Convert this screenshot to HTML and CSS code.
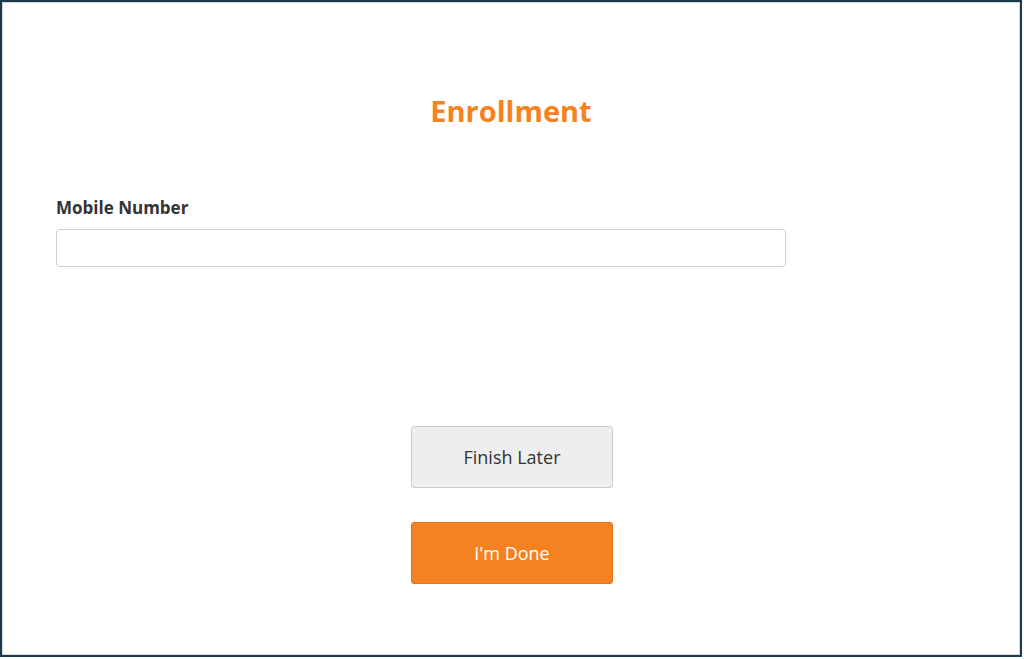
FILE: index.html
```html
<!DOCTYPE html>
<html lang="en">
<head>
<meta charset="utf-8">
<title>Enrollment</title>
<link rel="stylesheet" href="styles.css">
</head>
<body>
<div class="frame">
  <main class="content">
    <h1 class="title">Enrollment</h1>
    <form class="form">
      <label class="label" for="mobile">Mobile Number</label>
      <input class="input" id="mobile" type="text">
      <div class="actions">
        <button type="button" class="btn btn-secondary">Finish Later</button>
        <button type="button" class="btn btn-primary">I'm Done</button>
      </div>
    </form>
  </main>
</div>
</body>
</html>
```
FILE: styles.css
```css
html, body {
  margin: 0;
  padding: 0;
  background: #ffffff;
}
body {
  font-family: "Open Sans", "Liberation Sans", sans-serif;
  width: 1024px;
  height: 659px;
  overflow: hidden;
}
.frame {
  box-sizing: border-box;
  width: 1022px;
  height: 657px;
  border: 2px solid #1d3a4b;
  box-shadow: inset 1px 1px 0 #d6dadc, inset -1px -1px 0 #d6dadc;
  background: #fff;
}
.content {
  padding: 0;
}
.title {
  margin: 0;
  padding-top: 89px;
  text-align: center;
  font-size: 29px;
  line-height: 40px;
  font-weight: 700;
  color: #f5821f;
}
.form {
  display: flex;
  flex-direction: column;
  margin-top: 65px;
  padding-left: 54px;
}
.label {
  font-size: 17px;
  line-height: 23px;
  font-weight: 700;
  color: #333333;
}
.input {
  box-sizing: border-box;
  margin-top: 10px;
  width: 730px;
  height: 38px;
  border: 1px solid #cfcfcf;
  border-radius: 4px;
  background: #fff;
  outline: none;
}
.actions {
  display: flex;
  flex-direction: column;
  align-items: center;
  gap: 34px;
  margin-top: 159px;
  margin-left: 355px;
  width: 202px;
}
.btn {
  box-sizing: border-box;
  width: 202px;
  height: 62px;
  border-radius: 3px;
  font-family: "Open Sans", "Liberation Sans", sans-serif;
  font-size: 18px;
  cursor: pointer;
}
.btn-secondary {
  background: #eeeeee;
  border: 1px solid #cccccc;
  color: #333333;
}
.btn-primary {
  background: #f58220;
  border: 1px solid #e2741a;
  color: #ffffff;
}
```
